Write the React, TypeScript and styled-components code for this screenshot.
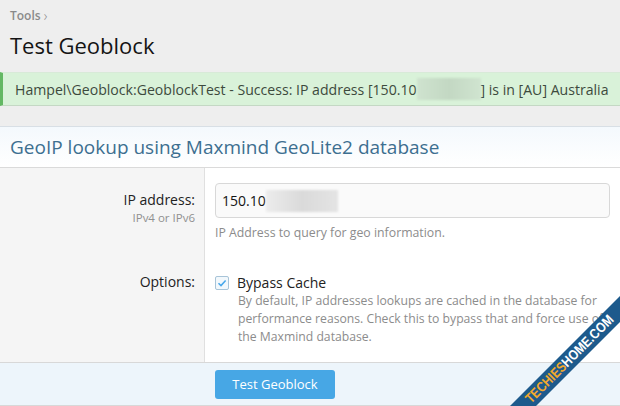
import React from "react";
import styled, { createGlobalStyle } from "styled-components";

const GlobalStyle = createGlobalStyle`
  html, body {
    margin: 0;
    padding: 0;
    background: #eeeeee;
    font-family: "Open Sans", "Noto Sans", sans-serif;
    color: #141414;
  }
`;

const App = () => {
  return (
    <Page>
      <GlobalStyle />
      <Crumbs>
        Tools <Chevron>›</Chevron>
      </Crumbs>
      <Title>Test Geoblock</Title>
      <Success>
        Hampel\Geoblock:GeoblockTest - Success: IP address [150.10
        <Blur width={64} tone="green" />] is in [AU] Australia
      </Success>
      <Block>
        <BlockHeader>GeoIP lookup using Maxmind GeoLite2 database</BlockHeader>
        <FormBody>
          <Row>
            <Label>
              <LabelText>IP address:</LabelText>
              <LabelHint>IPv4 or IPv6</LabelHint>
            </Label>
            <Field>
              <Input>
                150.10
                <Blur width={72} tone="grey" />
              </Input>
              <Explain>IP Address to query for geo information.</Explain>
            </Field>
          </Row>
          <Row tall>
            <Label>
              <LabelText>Options:</LabelText>
            </Label>
            <Field>
              <CheckRow>
                <CheckBox>
                  <svg width="10" height="10" viewBox="0 0 10 10">
                    <path d="M1.5 5.2 L4 7.6 L8.6 2.4" fill="none" stroke="#47a7eb" strokeWidth="1.5" />
                  </svg>
                </CheckBox>
                <CheckLabel>Bypass Cache</CheckLabel>
              </CheckRow>
              <CheckHint>
                By default, IP addresses lookups are cached in the database for performance reasons. Check
                this to bypass that and force use of the Maxmind database.
              </CheckHint>
            </Field>
          </Row>
        </FormBody>
        <Footer>
          <Spacer />
          <Button>Test Geoblock</Button>
        </Footer>
      </Block>
      <Watermark viewBox="0 0 110 110" width="110" height="110">
        <polygon points="0,110 110,0 110,26 26,110" fill="#1d5a8c" />
        <text
          x="0"
          y="0"
          transform="translate(21 108) rotate(-45)"
          fontFamily="Liberation Sans, sans-serif"
          fontWeight="bold"
          fontSize="14"
          textLength="118"
          lengthAdjust="spacingAndGlyphs"
          fill="#f2a92e"
        >
          TECHIES<tspan fill="#ffffff">HOME.COM</tspan>
        </text>
      </Watermark>
    </Page>
  );
};

export default App;

const Page = styled.div`
  position: relative;
  width: 620px;
  height: 406px;
  overflow: hidden;
  background: #eeeeee;
`;

const Crumbs = styled.div`
  padding: 5px 10px 0;
  height: 21px;
  font-size: 12px;
  font-weight: 600;
  color: #8a8a8a;
  display: flex;
  align-items: center;
  gap: 3px;
`;

const Chevron = styled.span`
  font-size: 14px;
  font-weight: 300;
`;

const Title = styled.h1`
  margin: 0;
  padding: 4px 10px 0;
  height: 42px;
  font-size: 22px;
  font-weight: 400;
  color: #141414;
`;

const Success = styled.div`
  display: flex;
  align-items: center;
  height: 32px;
  padding-left: 12px;
  border-left: 3px solid #63b863;
  border-bottom: 1px solid #c4d8c4;
  border-top: 1px solid #d8ead8;
  background: #d9f2d9;
  font-size: 14.1px;
  color: #3d4a3d;
  white-space: nowrap;
`;

const Blur = styled.span<{ width: number; tone: "green" | "grey" }>`
  display: inline-block;
  width: ${(p) => p.width}px;
  height: 22px;
  background: ${(p) =>
    p.tone === "green"
      ? "linear-gradient(90deg, #cfe3cf, #c3d8c3 50%, #d0e4d0)"
      : "linear-gradient(90deg, #ececec, #dadada 50%, #e4e4e4)"};
  filter: blur(1px);
`;

const Block = styled.div`
  margin-top: 20px;
  border-top: 1px solid #d8dfe5;
  background: #ffffff;
`;

const BlockHeader = styled.h2`
  margin: 0;
  height: 40px;
  padding: 0 10px;
  display: flex;
  align-items: center;
  font-size: 19px;
  font-weight: 400;
  color: #3d6f90;
  background: linear-gradient(180deg, #f4f9fd, #ffffff);
  border-bottom: 1px solid #dadada;
`;

const FormBody = styled.div`
  background: linear-gradient(90deg, #f5f5f5 0, #f5f5f5 204px, #e0e0e0 204px, #e0e0e0 205px, #ffffff 205px);
  padding-top: 15px;
  padding-bottom: 16px;
`;

const Row = styled.div<{ tall?: boolean }>`
  display: grid;
  grid-template-columns: 205px 1fr;
  margin-top: ${(p) => (p.tall ? "24px" : "0")};
`;

const Label = styled.div`
  padding-right: 10px;
  text-align: right;
  padding-top: 7px;
`;

const LabelText = styled.div`
  font-size: 14px;
  color: #222;
  line-height: 20px;
`;

const LabelHint = styled.div`
  font-size: 11.5px;
  color: #909090;
  line-height: 16px;
`;

const Field = styled.div`
  padding: 0 10px;
`;

const Input = styled.div`
  height: 33px;
  border: 1px solid #d8d8d8;
  border-radius: 4px;
  background: #fafafa;
  display: flex;
  align-items: center;
  padding-left: 6px;
  font-size: 14px;
  color: #141414;
`;

const Explain = styled.div`
  margin-top: 6px;
  font-size: 12.3px;
  color: #8c8c8c;
`;

const CheckRow = styled.div`
  display: flex;
  align-items: center;
  gap: 8px;
  padding-top: 8px;
`;

const CheckBox = styled.span`
  width: 12px;
  height: 12px;
  border: 1px solid #a8c4d8;
  border-radius: 2px;
  background: #f2f8fc;
  display: flex;
  align-items: center;
  justify-content: center;
`;

const CheckLabel = styled.span`
  font-size: 14px;
  color: #222;
`;

const CheckHint = styled.div`
  padding-left: 23px;
  padding-right: 0;
  margin-right: -6px;
  font-size: 12.2px;
  line-height: 18px;
  color: #8c8c8c;
`;

const Footer = styled.div`
  display: grid;
  grid-template-columns: 215px auto;
  align-items: center;
  height: 42px;
  border-top: 1px solid #d8d8d8;
  border-bottom: 1px solid #d8d8d8;
  background: #edf5fb;
`;

const Spacer = styled.div``;

const Button = styled.button`
  width: 120px;
  height: 29px;
  border: none;
  border-radius: 3px;
  background: #47a7e5;
  color: #ffffff;
  font-family: inherit;
  font-size: 13px;
`;

const Watermark = styled.svg`
  position: absolute;
  right: 0;
  bottom: 0;
`;
